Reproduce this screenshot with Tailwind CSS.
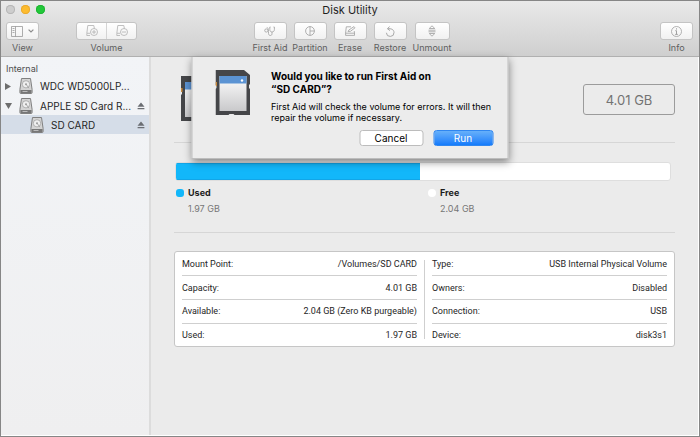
<!DOCTYPE html>
<html lang="en">
<head>
<meta charset="utf-8">
<meta name="viewport" content="width=device-width, initial-scale=1">
<title>Disk Utility</title>
<script src="https://cdn.jsdelivr.net/npm/@tailwindcss/browser@4"></script>
</head>
<body class="bg-[#ebebeb] font-['Inter','Liberation_Sans',sans-serif] text-[10px] leading-3 text-[#262626]">
<svg class="absolute size-0" aria-hidden="true">
  <defs><linearGradient id="paper" x2="0" y2="1"><stop stop-color="#fdfdfd"/><stop offset="1" stop-color="#c9c9cb"/></linearGradient></defs>
  <symbol id="drive" viewBox="0 0 14 16">
    <path d="M2.5.5h9l1.600 11v3.200c0 .5-.3.8-.8.8H1.700c-.5 0-.8-.3-.8-.8v-3.200z" fill="#d4d4d4" stroke="#808080"/>
    <path d="M1.500 12h11v3h-11z" fill="#777"/>
    <path d="M3.500 13.500h5" stroke="#bbb"/>
    <ellipse cx="7" cy="6.300" rx="3.700" ry="3.600" fill="#efefef" stroke="#a2a2a2" stroke-width=".8"/>
    <circle cx="7" cy="6.300" r="1" fill="#999"/>
    <path d="M7.500 6.800l2.400 3.400" stroke="#999" stroke-width=".8"/>
  </symbol>
  <symbol id="card" viewBox="0 0 35 46">
    <path d="M1 0h27.500l6 5v9l-1 1v3l1 1v26H19l-1-1h-4l-1 1H0V19l1-1v-3H0V0z" fill="#454649"/>
    <path d="M0 12h1.500v4H0z" fill="#c98a3c"/>
    <path d="M4 6h27v35H4z" fill="url(#paper)"/>
    <path d="M4 6h27v7.500H4z" fill="#5b93d3"/>
    <circle cx="26.500" cy="10.500" r="1.200" fill="#fff"/>
  </symbol>
  <symbol id="eject" viewBox="0 0 8 8"><path d="M4 .5L7.500 4.800H.5zM.6 5.900h6.800v1.300H.6z" fill="#6b6e73"/></symbol>
</svg>

<div class="flex min-h-screen flex-col border border-[#868686]">
  <header class="border-b border-[#b0b0b0] bg-linear-to-b from-[#e9e9e9] to-[#cfcfcf]">
    <div class="grid h-[17px] grid-cols-[1fr_auto_1fr] items-center px-[5px]">
      <div class="flex gap-[6px]">
        <button aria-label="Close" class="size-[9px] rounded-full bg-[#cdcdcd] ring ring-[#b5b5b5] ring-inset"></button>
        <button aria-label="Minimize" class="size-[9px] rounded-full bg-[#fdbc2f] ring ring-[#e9a930] ring-inset"></button>
        <button aria-label="Zoom" class="size-[9px] rounded-full bg-[#22c83a] ring ring-[#1fb433] ring-inset"></button>
      </div>
      <h1 class="text-[11px] font-normal text-[#1f1f1f]">Disk Utility</h1>
    </div>
    <div class="grid grid-cols-[1fr_auto_1fr] pt-1 pr-[6px] pb-[2px] pl-[5px] text-[9px] text-[#5e5e5e]">
      <div class="flex gap-[37px]">
        <label class="flex flex-col items-center gap-[2px]">
          <button class="flex h-[18px] w-[33px] items-center justify-center gap-[5px] rounded-[3px] border border-[#c4c4c4] bg-linear-to-b from-white to-[#f1f1f1] text-[#8d8d8d]">
            <svg class="h-[11px] w-3" viewBox="0 0 12 11" fill="none" stroke="currentColor"><path d="M.5.5h11v10H.5zM4.500.5v10M1.500 2.500h2M1.500 4.500h2M1.500 6.500h2" stroke-width=".7"/></svg>
            <svg class="h-1 w-[6px]" viewBox="0 0 6 4" fill="none" stroke="currentColor" stroke-width="1.200"><path d="M.6.6L3 3 5.400.6"/></svg>
          </button>View</label>
        <div class="flex flex-col items-center gap-[2px]">
          <div class="flex h-[18px] w-[61px] divide-x divide-[#d4d4d4] rounded-[3px] border border-[#c4c4c4] bg-linear-to-b from-white to-[#f1f1f1] text-[#b0b0b0]">
            <button aria-label="Add volume" class="flex flex-1 items-center justify-center"><svg class="h-3 w-3" viewBox="0 0 12 12" fill="none" stroke="currentColor" stroke-width=".8"><path d="M4 10.500H.8V8.500l1-8h6l.6 3M1 8.300h3M8 5v4M6 7h4"/><circle cx="8" cy="7" r="3.500"/></svg></button>
            <button aria-label="Remove volume" class="flex flex-1 items-center justify-center"><svg class="h-3 w-3" viewBox="0 0 12 12" fill="none" stroke="currentColor" stroke-width=".8"><path d="M4 10.500H.8V8.500l1-8h6l.6 3M1 8.300h3M6 7h4"/><circle cx="8" cy="7" r="3.500"/></svg></button>
          </div>Volume</div>
      </div>
      <div class="flex gap-[7px] pl-1">
        <label class="flex w-[33px] flex-col items-center gap-[2px] whitespace-nowrap">
          <button class="flex h-[18px] w-[33px] items-center justify-center rounded-[3px] border border-[#c4c4c4] bg-linear-to-b from-white to-[#f1f1f1] text-[#a8a8a8]">
            <svg class="h-[10px] w-3" viewBox="0 0 12 10" fill="none" stroke="currentColor" stroke-width=".9"><path d="M6.500 1H5.800v2.500c0 1.500.8 2.500 2.200 2.500s2.400-1 2.400-2.500V1h-.9M8 6v1.500C8 9 7.300 9.500 6.300 9.500S4.500 8.700 4.500 7.500V5.500C4.500 3 4 1.500 2.800 1.500"/><circle cx="2.300" cy="4.500" r="1.600"/></svg>
          </button>First Aid</label>
        <label class="flex w-[33px] flex-col items-center gap-[2px] whitespace-nowrap">
          <button class="flex h-[18px] w-[33px] items-center justify-center rounded-[3px] border border-[#c4c4c4] bg-linear-to-b from-white to-[#f1f1f1] text-[#a8a8a8]">
            <svg class="size-[10px]" viewBox="0 0 10 10" fill="none" stroke="currentColor" stroke-width=".9"><circle cx="5" cy="5" r="4.400"/><path d="M5 .5v9M5 5h4.500"/></svg>
          </button>Partition</label>
        <label class="flex w-[33px] flex-col items-center gap-[2px] whitespace-nowrap">
          <button class="flex h-[18px] w-[33px] items-center justify-center rounded-[3px] border border-[#c4c4c4] bg-linear-to-b from-white to-[#f1f1f1] text-[#a8a8a8]">
            <svg class="h-[10px] w-[11px]" viewBox="0 0 11 10" fill="none" stroke="currentColor" stroke-width=".9"><path d="M6 .8H1.300L.6 7v2.400h8.900V7L9.200 5M.6 7.200h8.900M3 5.500l1-1.600L9 .6l1 1.200-4.500 3.500z"/></svg>
          </button>Erase</label>
        <label class="flex w-[33px] flex-col items-center gap-[2px] whitespace-nowrap">
          <button class="flex h-[18px] w-[33px] items-center justify-center rounded-[3px] border border-[#c4c4c4] bg-linear-to-b from-white to-[#f1f1f1] text-[#a8a8a8]">
            <svg class="h-[11px] w-[10px]" viewBox="0 0 10 11" fill="none" stroke="currentColor"><path d="M4.500.5L2.500 2.800 5 4.600M2.700 2.800C6 2.300 9 3.500 9 6.500a3.800 3.800 0 0 1-7.600.3"/></svg>
          </button>Restore</label>
        <label class="ml-px flex w-[35px] flex-col items-center gap-[2px] whitespace-nowrap">
          <button class="flex h-[18px] w-[35px] items-center justify-center rounded-[3px] border border-[#c4c4c4] bg-linear-to-b from-white to-[#f1f1f1] text-[#a8a8a8]">
            <svg class="h-[12px] w-2" viewBox="0 0 8 12" fill="none" stroke="currentColor" stroke-width=".9"><path d="M4 .8L6.800 3.500H1.200zM4 11.200L6.800 8.500H1.200zM.5 5.200h7M.5 6.800h7"/></svg>
          </button>Unmount</label>
      </div>
      <div class="flex justify-end">
        <label class="flex flex-col items-center gap-[2px]">
          <button class="flex h-[18px] w-[33px] items-center justify-center rounded-[3px] border border-[#c4c4c4] bg-linear-to-b from-white to-[#f1f1f1] text-[#a0a0a0]">
            <svg class="size-[11px]" viewBox="0 0 11 11" fill="none" stroke="currentColor" stroke-width=".8"><circle cx="5.500" cy="5.500" r="5"/><path d="M5.500 2.300v1.200M4.300 4.700h1.200v3.600M4.200 8.400h2.600" stroke-width="1"/></svg>
          </button>Info</label>
      </div>
    </div>
  </header>

  <div class="relative flex flex-1 border-r border-b border-white">
    <nav class="w-[150px] shrink-0 border-r-2 border-[#dcdcdc] bg-linear-to-b from-[#f2f4f7] to-[#efeff0] pt-[6px]">
      <h2 class="pl-[5px] text-[9px] font-normal text-[#4e4e4e]">Internal</h2>
      <ul class="pt-px">
        <li class="flex h-5 items-center pr-1 pl-1">
          <svg class="h-[7px] w-[6px]" viewBox="0 0 6 7"><path d="M0 0l6 3.500L0 7z" fill="#6e6e6e"/></svg>
          <svg class="ml-2 h-4 w-[14px]"><use href="#drive"/></svg>
          <a href="#" class="ml-[7px] flex-1 whitespace-nowrap">WDC WD5000LP...</a>
        </li>
        <li class="flex h-[19px] items-center pr-1 pl-1">
          <svg class="h-[6px] w-[7px]" viewBox="0 0 7 6"><path d="M0 0h7L3.500 6z" fill="#6e6e6e"/></svg>
          <svg class="ml-[7px] h-4 w-[14px]"><use href="#drive"/></svg>
          <a href="#" class="ml-[7px] flex-1 whitespace-nowrap">APPLE SD Card R...</a>
          <button aria-label="Eject APPLE SD Card Reader"><svg class="size-2"><use href="#eject"/></svg></button>
        </li>
        <li class="flex h-[19px] items-center bg-[#d5dde8] pr-1 pl-[29px]">
          <svg class="h-4 w-[14px]"><use href="#drive"/></svg>
          <a href="#" class="ml-[7px] flex-1 whitespace-nowrap">SD CARD</a>
          <button aria-label="Eject SD CARD"><svg class="size-2"><use href="#eject"/></svg></button>
        </li>
      </ul>
    </nav>

    <main class="flex-1 pt-[19px] pr-[23px] pl-[23px]">
      <div class="flex items-start justify-between pl-[7px]">
        <svg class="h-[46px] w-[35px]"><use href="#card"/></svg>
        <div class="mt-2 flex h-[31px] w-[92px] items-center justify-center rounded-[3px] border border-[#9b9b9b] text-[13px] text-[#737373]">4.01 GB</div>
      </div>
      <hr class="mt-5 border-[#d6d6d6]">
      <div class="mt-[19px] mr-1 ml-px flex h-[19px] overflow-hidden rounded-[3px] border border-[#dedede] bg-white">
        <div class="border-y border-[#12a6e8] bg-[#12b7fa]" style="width:49.3%"></div>
      </div>
      <dl class="mt-[6px] mr-1 ml-[2px] grid grid-cols-[252px_1fr] text-[9px]">
        <div class="grid grid-cols-[8px_1fr] items-center gap-x-1 gap-y-1">
          <span class="size-2 rounded-[3px] bg-[#12b7fa]"></span><dt class="font-bold text-[#1c1c1c]">Used</dt>
          <dd class="col-start-2 text-[#777]">1.97 GB</dd>
        </div>
        <div class="grid grid-cols-[8px_1fr] items-center gap-x-1 gap-y-1">
          <span class="size-2 rounded-full bg-white"></span><dt class="font-bold text-[#1c1c1c]">Free</dt>
          <dd class="col-start-2 text-[#777]">2.04 GB</dd>
        </div>
      </dl>
      <hr class="mt-[17px] border-[#d6d6d6]">
      <section class="mt-[18px] flex rounded-[3px] border border-[#c6c6c6] bg-white px-[7px] pt-px font-[Roboto,'Liberation_Sans',sans-serif] text-[9px]">
        <table class="h-[93px] flex-1">
          <tbody class="divide-y divide-[#cfcfcf]">
            <tr><th class="text-left font-normal">Mount Point:</th><td class="text-right">/Volumes/SD CARD</td></tr>
            <tr><th class="text-left font-normal">Capacity:</th><td class="text-right">4.01 GB</td></tr>
            <tr><th class="text-left font-normal">Available:</th><td class="text-right">2.04 GB (Zero KB purgeable)</td></tr>
            <tr><th class="text-left font-normal">Used:</th><td class="text-right">1.97 GB</td></tr>
          </tbody>
        </table>
        <div class="mx-[7px] my-[7px] w-px bg-[#cfcfcf]"></div>
        <table class="h-[93px] flex-1">
          <tbody class="divide-y divide-[#cfcfcf]">
            <tr><th class="text-left font-normal">Type:</th><td class="text-right">USB Internal Physical Volume</td></tr>
            <tr><th class="text-left font-normal">Owners:</th><td class="text-right">Disabled</td></tr>
            <tr><th class="text-left font-normal">Connection:</th><td class="text-right">USB</td></tr>
            <tr><th class="text-left font-normal">Device:</th><td class="text-right">disk3s1</td></tr>
          </tbody>
        </table>
      </section>
    </main>

    <div role="dialog" aria-labelledby="ask" class="absolute top-0 left-1/2 flex w-[317px] -translate-x-1/2 gap-[21px] border border-t-0 border-[#bdbdbd] bg-[#ececec] pt-[13px] pr-[14px] pb-3 pl-[23px] shadow-[0_3px_8px_rgba(0,0,0,0.45)]">
      <svg class="h-[46px] w-[35px] shrink-0"><use href="#card"/></svg>
      <div class="flex-1 whitespace-nowrap text-black">
        <h2 id="ask" class="text-[10px] leading-[13px] font-bold">Would you like to run First Aid on<br>“SD CARD”?</h2>
        <p class="mt-[5px] text-[9px] leading-[11px]">First Aid will check the volume for errors. It will then<br>repair the volume if necessary.</p>
        <div class="mt-[7px] flex justify-end gap-[10px] text-[10px]">
          <button class="h-4 w-16 rounded-[3px] border border-[#bcbcbc] bg-white">Cancel</button>
          <button class="h-4 w-[60px] rounded-[3px] border border-[#2f86f0] bg-linear-to-b from-[#66b0fa] to-[#117bfb] text-white">Run</button>
        </div>
      </div>
    </div>
  </div>
</div>
</body>
</html>
